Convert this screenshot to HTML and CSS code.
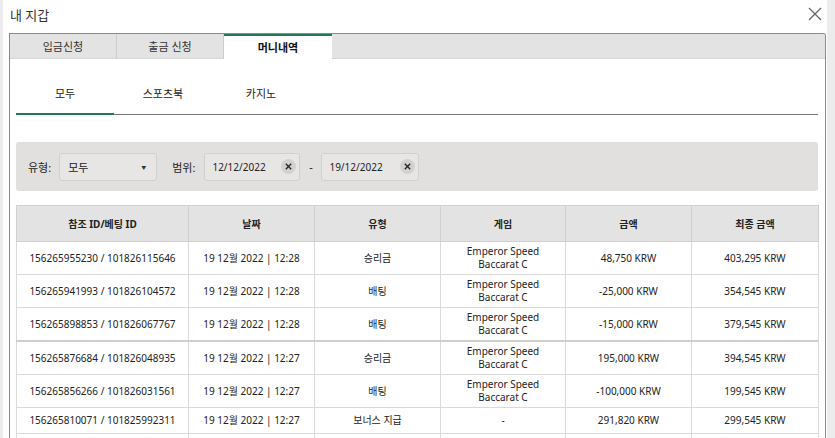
FILE: index.html
```html
<!DOCTYPE html>
<html lang="ko">
<head>
<meta charset="utf-8">
<title>내 지갑</title>
<link rel="stylesheet" href="styles.css">
</head>
<body>
<div class="modal">
  <div class="head">
    <span class="title">내 지갑</span>
    <button class="close" aria-label="닫기">
      <svg width="14" height="14" viewBox="0 0 14 14"><path d="M1 1L13 13M13 1L1 13" stroke="#666" stroke-width="1.3" fill="none"/></svg>
    </button>
  </div>
  <div class="panel">
    <div class="tabbar">
      <div class="tab t1">입금신청</div>
      <div class="tab t2">출금 신청</div>
      <div class="tab t3 active">머니내역</div>
      <div class="tab-rest"></div>
    </div>
    <div class="content">
      <div class="subtabs">
        <div class="subtab active">모두</div>
        <div class="subtab">스포츠북</div>
        <div class="subtab">카지노</div>
      </div>
      <div class="filter">
        <span class="flabel">유형:</span>
        <div class="select"><span>모두</span><span class="caret">▼</span></div>
        <span class="flabel range">범위:</span>
        <div class="date d1"><span>12/12/2022</span><span class="clear"><svg width="7" height="7" viewBox="0 0 7 7"><path d="M0.8 0.8L6.2 6.2M6.2 0.8L0.8 6.2" stroke="#222" stroke-width="1.3" fill="none"/></svg></span></div>
        <span class="dash">-</span>
        <div class="date d2"><span>19/12/2022</span><span class="clear"><svg width="7" height="7" viewBox="0 0 7 7"><path d="M0.8 0.8L6.2 6.2M6.2 0.8L0.8 6.2" stroke="#222" stroke-width="1.3" fill="none"/></svg></span></div>
      </div>
      <table class="history">
        <thead>
          <tr>
            <th class="c1">참조 ID/베팅 ID</th>
            <th class="c2">날짜</th>
            <th class="c3">유형</th>
            <th class="c4">게임</th>
            <th class="c5">금액</th>
            <th class="c6">최종 금액</th>
          </tr>
        </thead>
        <tbody>
          <tr>
            <td>156265955230 / 101826115646</td>
            <td>19 12월 2022 | 12:28</td>
            <td>승리금</td>
            <td>Emperor Speed<br>Baccarat C</td>
            <td>48,750 KRW</td>
            <td>403,295 KRW</td>
          </tr>
          <tr>
            <td>156265941993 / 101826104572</td>
            <td>19 12월 2022 | 12:28</td>
            <td>배팅</td>
            <td>Emperor Speed<br>Baccarat C</td>
            <td>-25,000 KRW</td>
            <td>354,545 KRW</td>
          </tr>
          <tr>
            <td>156265898853 / 101826067767</td>
            <td>19 12월 2022 | 12:28</td>
            <td>배팅</td>
            <td>Emperor Speed<br>Baccarat C</td>
            <td>-15,000 KRW</td>
            <td>379,545 KRW</td>
          </tr>
          <tr class="group">
            <td>156265876684 / 101826048935</td>
            <td>19 12월 2022 | 12:27</td>
            <td>승리금</td>
            <td>Emperor Speed<br>Baccarat C</td>
            <td>195,000 KRW</td>
            <td>394,545 KRW</td>
          </tr>
          <tr>
            <td>156265856266 / 101826031561</td>
            <td>19 12월 2022 | 12:27</td>
            <td>배팅</td>
            <td>Emperor Speed<br>Baccarat C</td>
            <td>-100,000 KRW</td>
            <td>199,545 KRW</td>
          </tr>
          <tr>
            <td>156265810071 / 101825992311</td>
            <td>19 12월 2022 | 12:27</td>
            <td>보너스 지급</td>
            <td>-</td>
            <td>291,820 KRW</td>
            <td>299,545 KRW</td>
          </tr>
          <tr>
            <td>&nbsp;</td>
            <td>&nbsp;</td>
            <td>&nbsp;</td>
            <td>&nbsp;</td>
            <td>&nbsp;</td>
            <td>&nbsp;</td>
          </tr>
        </tbody>
      </table>
    </div>
  </div>
</div>
</body>
</html>
```

FILE: styles.css
```css
* { box-sizing: border-box; }

html, body {
  margin: 0;
  padding: 0;
  height: 438px;
  overflow: hidden;
}

body {
  background: #ececec;
  font-family: "Noto Sans", "Noto Sans CJK KR", sans-serif;
  color: #222;
  font-size: 10px;
}

.modal {
  margin-left: 3px;
  width: 824px;
  height: 438px;
  background: #fff;
  overflow: hidden;
}

.head {
  height: 33px;
  display: flex;
  justify-content: space-between;
  align-items: flex-start;
  padding: 7px 5px 0 7px;
}

.title {
  font-size: 13px;
  line-height: 16px;
  color: #333;
}

.close {
  border: 0;
  background: none;
  padding: 0;
  margin-top: 0;
  width: 14px;
  height: 14px;
  display: block;
}
.close svg { display: block; }

.panel {
  margin-left: 6px;
  width: 817px;
  height: 405px;
  border: 1px solid #8a8a8a;
  border-bottom: 0;
  border-top-right-radius: 3px;
  overflow: hidden;
}

.tabbar {
  display: flex;
  height: 25px;
  background: #e3e3e3;
}

.tab {
  height: 25px;
  display: flex;
  align-items: center;
  justify-content: center;
  font-size: 11px;
  color: #333;
  border-right: 1px solid #cdcdcd;
  border-bottom: 1px solid #d6d6d6;
}
.t1 { width: 107px; }
.t2 { width: 107px; }
.t3 { width: 108px; }
.tab.active {
  background: #fff;
  border-top: 2px solid #1f7a55;
  border-bottom: 0;
  border-right: 0;
  font-weight: 700;
  color: #111;
  padding-bottom: 2px;
}
.tab-rest {
  flex: 1;
  border-bottom: 1px solid #d6d6d6;
}

.content {
  padding: 0 7px 0 6px;
}

.subtabs {
  display: flex;
  padding-top: 18px;
  border-bottom: 1px solid #777;
}

.subtab {
  width: 98px;
  height: 38px;
  display: flex;
  align-items: center;
  justify-content: center;
  padding-bottom: 4px;
  font-size: 11px;
  color: #222;
  border-bottom: 2px solid transparent;
  margin-bottom: -1px;
}
.subtab.active {
  border-bottom-color: #1f7a55;
}

.filter {
  margin-top: 27px;
  height: 49px;
  background: #e2e0df;
  border-radius: 3px;
  display: flex;
  align-items: center;
  padding-left: 12px;
}

.flabel {
  font-size: 11px;
  color: #222;
}

.select {
  margin-left: 8px;
  width: 98px;
  height: 28px;
  background: #e8e6e5;
  border: 1px solid #d2d0cf;
  border-radius: 3px;
  display: flex;
  align-items: center;
  justify-content: space-between;
  padding: 0 10px 0 8px;
  font-size: 11px;
}
.caret {
  font-size: 5px;
  color: #333;
}

.range { margin-left: 15px; }

.date {
  height: 28px;
  background: #e8e6e5;
  border: 1px solid #d2d0cf;
  border-radius: 3px;
  display: flex;
  align-items: center;
  justify-content: space-between;
  padding: 0 3px 0 7px;
  font-size: 10px;
}
.d1 { width: 96px; margin-left: 9px; }
.d2 { width: 98px; }

.clear {
  width: 15px;
  height: 15px;
  border-radius: 50%;
  background: #d3d1d0;
  display: flex;
  align-items: center;
  justify-content: center;
}
.clear svg { display: block; }

.dash {
  width: 21px;
  text-align: center;
  font-size: 11px;
}

.history {
  margin-top: 14px;
  width: 802px;
  border-collapse: collapse;
  table-layout: fixed;
  border: 1px solid #d4d4d4;
}

.history th {
  height: 36px;
  background: #e3e3e3;
  font-weight: 700;
  font-size: 10px;
  color: #222;
  border: 1px solid #d0d0d0;
  text-align: center;
  padding: 0 4px;
}

.c1 { width: 172px; }
.c2 { width: 126px; }
.c3 { width: 126px; }
.c4 { width: 125px; }
.c5 { width: 126px; }
.c6 { width: 127px; }

.history td {
  height: 26px;
  padding: 3px 4px;
  line-height: 13px;
  text-align: center;
  border: 1px solid #dadada;
  color: #222;
}

.history tr.group td {
  border-top: 2px solid #cfcfcf;
}
```
